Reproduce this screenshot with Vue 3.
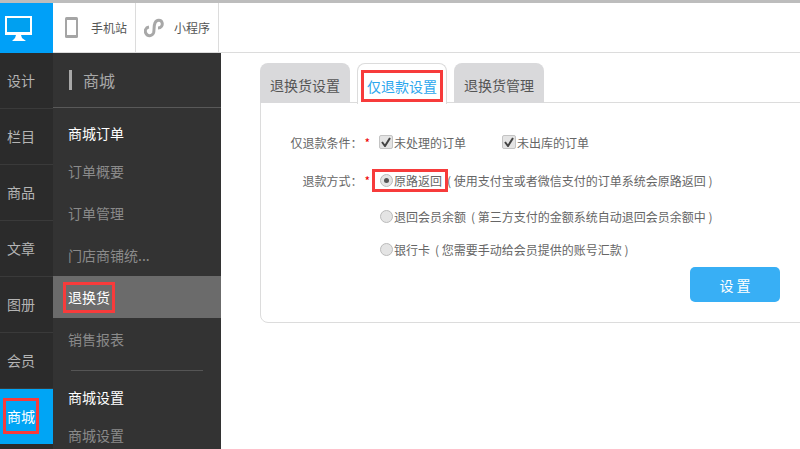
<script setup>
const rail = [
  { label: '设计' }, { label: '栏目' }, { label: '商品' }, { label: '文章' },
  { label: '图册' }, { label: '会员' }, { label: '商城', active: true, marked: true }
]
const tabs = [
  { label: '退换货设置' },
  { label: '仅退款设置', active: true },
  { label: '退换货管理' }
]
</script>

<template>
  <div class="page">
    <header class="topbar">
      <div class="logo">
        <svg width="28" height="26" viewBox="0 0 28 26">
          <rect x="0" y="0" width="27" height="19" fill="#fff" />
          <rect x="2" y="2" width="23" height="14" fill="#00a0f0" />
          <path d="M11 19h5l1 3 4 3H7l3-3z" fill="#fff" />
        </svg>
      </div>
      <div class="site-tab tab-phone">
        <svg width="14" height="21" viewBox="0 0 14 21">
          <rect x="0" y="0" width="13" height="21" rx="1.5" fill="#a5a5a5" />
          <rect x="2" y="3" width="9" height="15" fill="#fff" />
        </svg>
        <span>手机站</span>
      </div>
      <div class="site-tab tab-mini">
        <svg width="20" height="20" viewBox="0 0 20 20" fill="none" stroke="#a8a8a8" stroke-width="3">
          <path d="M5 9C1.5 9.5 0.5 13 2 15.5C3.5 18.5 8 18.5 9.5 15C10.5 12.5 9.5 8 11 5C12.5 1.5 17 1.5 18 4.5C19 7.5 17 10 14 10" />
        </svg>
        <span>小程序</span>
      </div>
    </header>

    <div class="body">
      <nav class="rail">
        <div v-for="item in rail" :key="item.label" class="rail-item" :class="{ active: item.active }">
          <span class="txt" :class="{ mark: item.marked }">{{ item.label }}</span>
        </div>
      </nav>

      <aside class="side">
        <div class="side-title"><i></i><span>商城</span></div>
        <div class="side-head first">商城订单</div>
        <div class="side-link">订单概要</div>
        <div class="side-link">订单管理</div>
        <div class="side-link">门店商铺统...</div>
        <div class="side-link current"><span class="mark">退换货</span></div>
        <div class="side-link">销售报表</div>
        <div class="side-rule"></div>
        <div class="side-head">商城设置</div>
        <div class="side-link">商城设置</div>
      </aside>

      <main class="main">
        <div class="tabs">
          <div v-for="t in tabs" :key="t.label" class="tab" :class="{ on: t.active }">
            <span :class="{ mark: t.active }">{{ t.label }}</span>
          </div>
        </div>
        <section class="card">
          <div class="row row-cond">
            <div class="lab">仅退款条件：<em>*</em></div>
            <label class="opt opt-a"><span class="check"><svg width="10" height="10" viewBox="0 0 10 10"><path d="M1 5l3 4 5-8" fill="none" stroke="#444" stroke-width="2" /></svg></span>未处理的订单</label>
            <label class="opt"><span class="check"><svg width="10" height="10" viewBox="0 0 10 10"><path d="M1 5l3 4 5-8" fill="none" stroke="#444" stroke-width="2" /></svg></span>未出库的订单</label>
          </div>
          <div class="row row-way">
            <div class="lab">退款方式：<em>*</em></div>
            <label class="opt way-opt"><span class="mark-radio"><span class="radio on"></span>原路返回</span><span class="note">( 使用支付宝或者微信支付的订单系统会原路返回 )</span></label>
          </div>
          <div class="row row-more">
            <div class="lab"></div>
            <label class="opt"><span class="radio"></span>退回会员余额<span class="note">( 第三方支付的金额系统自动退回会员余额中 )</span></label>
          </div>
          <div class="row row-more last">
            <div class="lab"></div>
            <label class="opt"><span class="radio"></span>银行卡<span class="note">( 您需要手动给会员提供的账号汇款 )</span></label>
          </div>
          <div class="actions"><button class="btn">设 置</button></div>
        </section>
      </main>
    </div>
  </div>
</template>

<style>
html, body { margin: 0; background: #fff; overflow: hidden; }
</style>

<style scoped>
.page {
  width: 800px;
  height: 449px;
  overflow: hidden;
  box-sizing: border-box;
  border-top: 3px solid #bdbdbd;
  font-family: "Noto Sans CJK SC", "Liberation Sans", sans-serif;
  font-size: 13px;
  color: #666;
  background: #fff;
}
.topbar {
  display: flex;
  height: 50px;
  box-sizing: border-box;
  border-bottom: 1px solid #dcdcdc;
}
.logo {
  width: 53px;
  height: 50px;
  background: #00a0f8;
  display: flex;
  align-items: center;
  padding: 1px 0 0 5px;
  box-sizing: border-box;
}
.site-tab {
  display: flex;
  align-items: center;
  height: 49px;
  box-sizing: border-box;
  border-right: 1px solid #dcdcdc;
  font-size: 12px;
  color: #555;
}
.tab-phone { width: 83px; padding-left: 12px; gap: 13px; }
.tab-phone span { margin-left: -1px; }
.tab-mini { width: 83px; padding-left: 8px; gap: 10px; }
.body { display: flex; height: 396px; }
.rail { width: 53px; background: #2b2b2b; }
.rail-item {
  height: 56px;
  box-sizing: border-box;
  border-bottom: 1px solid #3a3a3a;
  display: flex;
  align-items: center;
  padding: 0 0 2px 7px;
  color: #b4b4b4;
  font-size: 14px;
}
.rail-item.active { background: #00a5f5; color: #fff; border-bottom: 0; height: 55px; }
.txt { position: relative; display: inline-block; line-height: 20px; }
.txt.mark { outline: 3px solid #f73b3b; outline-offset: 1px; padding: 4px 0; }
.side { width: 168px; background: #333; color: #8a8a8a; font-size: 14px; }
.side-title {
  height: 55px;
  box-sizing: border-box;
  border-bottom: 1px solid #595959;
  display: flex;
  align-items: center;
  gap: 11px;
  padding: 0 0 1px 16px;
  font-size: 16px;
  color: #a8a8a8;
}
.side-title i { width: 3px; height: 20px; background: #a8a8a8; }
.side-head {
  height: 34px;
  line-height: 34px;
  padding-left: 15px;
  color: #fff;
  font-size: 14px;
}
.side-head.first { margin-top: 8px; }
.side-link {
  height: 42px;
  display: flex;
  align-items: center;
  padding-left: 15px;
  font-size: 14px;
}
.side-link.current { background: #6b6b6b; color: #fff; }
.side-link .mark { outline: 3px solid #f73b3b; outline-offset: 2px; line-height: 21px; }
.side-rule { height: 1px; background: #555; margin: 10px 18px 9px 18px; }
.main { flex: 1; padding: 10px 0 0 39px; min-width: 0; }
.tabs { display: flex; gap: 7px; height: 40px; position: relative; z-index: 1; }
.tab {
  width: 90px;
  height: 40px;
  box-sizing: border-box;
  background: #d9d9db;
  border-radius: 8px 8px 0 0;
  display: flex;
  align-items: center;
  justify-content: center;
  padding-top: 3px;
  font-size: 14px;
  color: #555;
}
.tab.on {
  background: #fff;
  border: 1px solid #dcdcdc;
  border-bottom: 0;
  height: 41px;
  color: #2da7ee;
}
.tab .mark { outline: 3px solid #f73b3b; outline-offset: 3px; line-height: 20px; }
.card {
  width: 560px;
  height: 221px;
  box-sizing: border-box;
  border: 1px solid #dcdcdc;
  border-radius: 0 0 0 8px;
  margin-top: -1px;
  padding-top: 28px;
  font-size: 12px;
  color: #666;
}
.row { display: flex; align-items: center; height: 22px; }
.row-way { margin-top: 16px; }
.row-more { margin-top: 14px; }
.row-more.last { margin-top: 11px; }
.lab { width: 109px; text-align: right; flex: none; white-space: nowrap; }
.lab em { color: #e00; font-style: normal; margin-left: 2px; }
.opt { display: inline-flex; align-items: center; white-space: nowrap; }
.opt-a { margin-right: 36px; }
.row-cond .opt-a { margin-left: 9px; }
.row-more .opt { margin-left: 10px; }
.way-opt { margin-left: 7px; }
.check {
  width: 12px;
  height: 12px;
  border: 1px solid #c4c4c4;
  border-radius: 2px;
  background: #e4e4e4;
  display: inline-flex;
  align-items: center;
  justify-content: center;
  margin-right: 1px;
}
.radio {
  width: 11px;
  height: 11px;
  border: 1px solid #bbb;
  border-radius: 50%;
  background: #e4e4e4;
  display: inline-block;
  margin-right: 1px;
  position: relative;
}
.radio.on::after {
  content: "";
  position: absolute;
  left: 3px;
  top: 3px;
  width: 5px;
  height: 5px;
  border-radius: 50%;
  background: #555;
}
.mark-radio {
  display: inline-flex;
  align-items: center;
  outline: 3px solid #f73b3b;
  outline-offset: 2px;
  line-height: 13px;
  padding: 0 1px 0 3px;
}
.note { color: #666; padding-left: 5px; }
.way-opt .note { padding-left: 4px; }
.actions { display: flex; padding: 7px 0 0 429px; }
.btn {
  width: 90px;
  height: 35px;
  border: 0;
  border-radius: 5px;
  background: #38aff5;
  color: #fff;
  font-family: inherit;
  font-size: 14px;
}
</style>
